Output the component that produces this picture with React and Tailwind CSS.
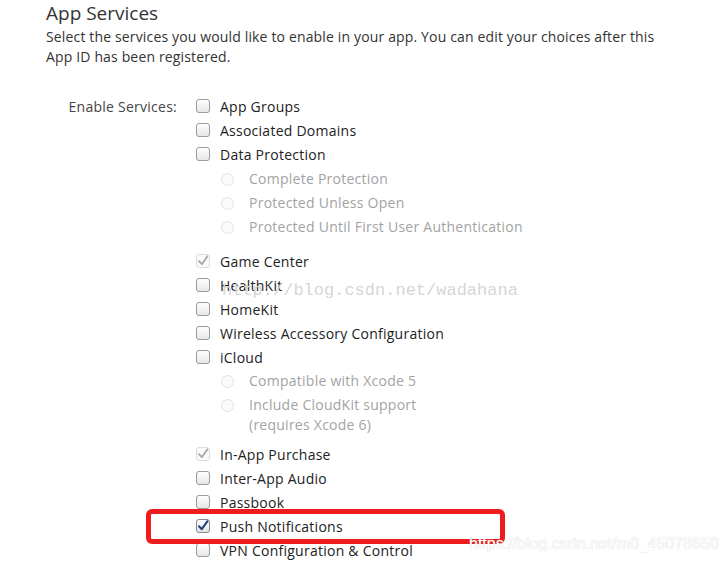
import React from "react";

const Checkbox = ({ state }) => {
  if (state === "checked") {
    return (
      <svg width="14" height="14" viewBox="0 0 14 14" className="shrink-0">
        <defs>
          <linearGradient id="cbOn" x1="0" y1="0" x2="0" y2="1">
            <stop offset="0" stopColor="#ffffff" />
            <stop offset="1" stopColor="#e4e4e4" />
          </linearGradient>
        </defs>
        <rect x="0.5" y="0.5" width="13" height="13" rx="2.5" fill="url(#cbOn)" stroke="#8a8a8a" />
        <path d="M3 7.2 L5.8 10.2 L11.5 2.2" fill="none" stroke="#1f3f7a" strokeWidth="2" strokeLinecap="round" strokeLinejoin="round" />
      </svg>
    );
  }
  if (state === "disabled-checked") {
    return (
      <svg width="14" height="14" viewBox="0 0 14 14" className="shrink-0">
        <rect x="0.5" y="0.5" width="13" height="13" rx="2.5" fill="#fafafa" stroke="#dcdcdc" />
        <path d="M3 7.2 L5.8 10.2 L11.5 2.2" fill="none" stroke="#a8a8a8" strokeWidth="1.8" strokeLinecap="round" strokeLinejoin="round" />
      </svg>
    );
  }
  return (
    <svg width="14" height="14" viewBox="0 0 14 14" className="shrink-0">
      <defs>
        <linearGradient id="cbOff" x1="0" y1="0" x2="0" y2="1">
          <stop offset="0" stopColor="#ffffff" />
          <stop offset="1" stopColor="#e6e6e6" />
        </linearGradient>
      </defs>
      <rect x="0.5" y="0.5" width="13" height="13" rx="2.5" fill="url(#cbOff)" stroke="#9a9a9a" />
    </svg>
  );
};

const Radio = () => (
  <svg width="13" height="13" viewBox="0 0 13 13" className="shrink-0">
    <circle cx="6.5" cy="6.5" r="6" fill="#fbfbfb" stroke="#e0e0e0" />
  </svg>
);

const Row = ({ label, state }) => (
  <div className="flex h-6 items-center gap-[10px]">
    <Checkbox state={state} />
    <span className="text-[14px] tracking-[0.25px] text-[#222]">{label}</span>
  </div>
);

const SubRow = ({ lines }) => (
  <div className="flex items-start gap-[15px] py-[2px] pl-[25px] leading-[20px]">
    <div className="flex h-5 items-center">
      <Radio />
    </div>
    <span className="text-[14px] tracking-[0.25px] text-[#a3a3a3]">
      {lines.map((l) => (
        <div key={l}>{l}</div>
      ))}
    </span>
  </div>
);

const App = () => {
  return (
    <div className="relative h-[562px] w-[727px] overflow-hidden bg-white font-['Open_Sans',sans-serif]">
      <div className="pl-[46px]">
        <h1 className="text-[19px] leading-[26px] text-[#333]">App Services</h1>
        <p className="mt-[1px] w-[620px] text-[14px] leading-[20px] tracking-[0.15px] text-[#333]">
          Select the services you would like to enable in your app. You can edit your choices after this App ID has been registered.
        </p>

        <div className="mt-[27px] flex">
          <div className="flex h-6 w-[131px] items-center justify-end text-[14px] tracking-[0.25px] text-[#444]">
            Enable Services:
          </div>
          <div className="ml-[19px]">
            <Row label="App Groups" />
            <Row label="Associated Domains" />
            <Row label="Data Protection" />
            <div className="mb-[10px] pt-[1px]">
              <SubRow lines={["Complete Protection"]} />
              <SubRow lines={["Protected Unless Open"]} />
              <SubRow lines={["Protected Until First User Authentication"]} />
            </div>
            <Row label="Game Center" state="disabled-checked" />
            <Row label="HealthKit" />
            <Row label="HomeKit" />
            <Row label="Wireless Accessory Configuration" />
            <Row label="iCloud" />
            <div className="mb-[5px]">
              <SubRow lines={["Compatible with Xcode 5"]} />
              <SubRow lines={["Include CloudKit support", "(requires Xcode 6)"]} />
            </div>
            <Row label="In-App Purchase" state="disabled-checked" />
            <Row label="Inter-App Audio" />
            <Row label="Passbook" />
            <Row label="Push Notifications" state="checked" />
            <Row label="VPN Configuration & Control" />
          </div>
        </div>
      </div>

      <div className="pointer-events-none absolute left-[222px] top-[279px] font-['Liberation_Mono',monospace] text-[17px] leading-[24px] text-[#d6d6d6]">
        http://blog.csdn.net/wadahana
      </div>

      <div className="pointer-events-none absolute left-[146px] top-[509px] h-[35px] w-[359px] rounded-[6px] border-[5px] border-[#ee1c1c]" />

      <div className="pointer-events-none absolute left-[469px] top-[532px] font-['Liberation_Sans',sans-serif] text-[16px] leading-[24px] text-white [text-shadow:0_0_1px_#c0c0c0]">
        https://blog.csdn.net/m0_45078650
      </div>
    </div>
  );
};

export default App;
